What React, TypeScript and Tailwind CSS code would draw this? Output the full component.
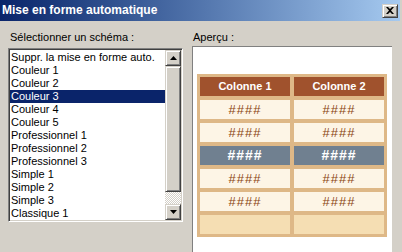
import React from 'react';

const items = [
  'Suppr. la mise en forme auto.',
  'Couleur 1',
  'Couleur 2',
  'Couleur 3',
  'Couleur 4',
  'Couleur 5',
  'Professionnel 1',
  'Professionnel 2',
  'Professionnel 3',
  'Simple 1',
  'Simple 2',
  'Simple 3',
  'Classique 1',
];

const raised =
  'bg-[#d4d0c8] border border-t-[#d4d0c8] border-l-[#d4d0c8] border-r-[#404040] border-b-[#404040] shadow-[inset_1px_1px_0_#fff,inset_-1px_-1px_0_#808080]';

type RowKind = 'head' | 'body' | 'hl' | 'foot';

const rows: RowKind[] = ['head', 'body', 'body', 'hl', 'body', 'body', 'foot'];

const cellClass: Record<RowKind, string> = {
  head: 'bg-[#a0522d] text-white font-bold',
  body: 'bg-[#fdf5e6] text-[#8b4513] text-[13px] tracking-[1px]',
  hl: 'bg-[#708090] text-white font-bold text-[14px] tracking-[1px]',
  foot: 'bg-[#f5deb3]',
};

const PreviewCell: React.FC<{ kind: RowKind; col: number }> = ({ kind, col }) => (
  <div className={`h-[19px] flex items-center justify-center ${cellClass[kind]}`}>
    {kind === 'head' ? `Colonne ${col}` : kind === 'foot' ? '' : '####'}
  </div>
);

export default function App() {
  return (
    <div
      className="w-[402px] h-[252px] overflow-hidden bg-[#d4d0c8] text-[11px] leading-[13px] text-black"
      style={{ fontFamily: '"Liberation Sans", Arial, sans-serif' }}
    >
      {/* title bar */}
      <div className="w-[400px] h-[21px] flex items-center justify-between bg-gradient-to-r from-[#0a246a] to-[#a6caf0] pl-[2px] pr-[2px]">
        <span className="text-white font-bold text-[12px]">Mise en forme automatique</span>
        <div className={`w-[16px] h-[14px] flex items-center justify-center ${raised}`}>
          <svg width="8" height="7" viewBox="0 0 8 7">
            <path d="M0 0h2l2 2 2-2h2L5 3.5 8 7H6L4 5 2 7H0l3-3.5z" fill="#000" />
          </svg>
        </div>
      </div>

      <div className="flex gap-[9px] pl-[8px] pt-[10px]">
        {/* left column */}
        <div className="w-[175px] flex flex-col">
          <div className="pl-[2px] h-[13px]">Sélectionner un schéma :</div>
          <div className="mt-[4px] h-[174px] flex border border-t-[#808080] border-l-[#808080] border-r-white border-b-white shadow-[inset_1px_1px_0_#404040,inset_-1px_-1px_0_#d4d0c8] p-[1px]">
            <div className="flex-1 bg-white pt-[1px]">
              {items.map((it) => (
                <div
                  key={it}
                  className={`h-[13px] pl-[1px] whitespace-nowrap ${it === 'Couleur 3' ? 'bg-[#0a246a] text-white' : ''}`}
                >
                  {it}
                </div>
              ))}
            </div>
            <div className="w-[16px] flex flex-col">
              <div className={`h-[16px] flex items-center justify-center ${raised}`}>
                <svg width="7" height="4" viewBox="0 0 7 4">
                  <path d="M3.5 0L7 4H0z" fill="#000" />
                </svg>
              </div>
              <div className={`h-[126px] ${raised}`} />
              <div className="flex-1 [background:repeating-conic-gradient(#fff_0_25%,#d4d0c8_0_50%)_0_0/2px_2px]" />
              <div className={`h-[16px] flex items-center justify-center ${raised}`}>
                <svg width="7" height="4" viewBox="0 0 7 4">
                  <path d="M0 0h7L3.5 4z" fill="#000" />
                </svg>
              </div>
            </div>
          </div>
        </div>

        {/* right column */}
        <div className="w-[200px] flex flex-col">
          <div className="pl-[1px] h-[13px]">Aperçu :</div>
          <div className="mt-[2px] h-[220px] bg-white border-t border-l border-[#808080] pl-[4px] pt-[27px]">
            <div className="w-[190px] bg-[#deb887] p-[3px] grid grid-cols-2 gap-[4px]">
              {rows.map((r, i) => (
                <React.Fragment key={i}>
                  <PreviewCell kind={r} col={1} />
                  <PreviewCell kind={r} col={2} />
                </React.Fragment>
              ))}
            </div>
          </div>
        </div>
      </div>
    </div>
  );
}
